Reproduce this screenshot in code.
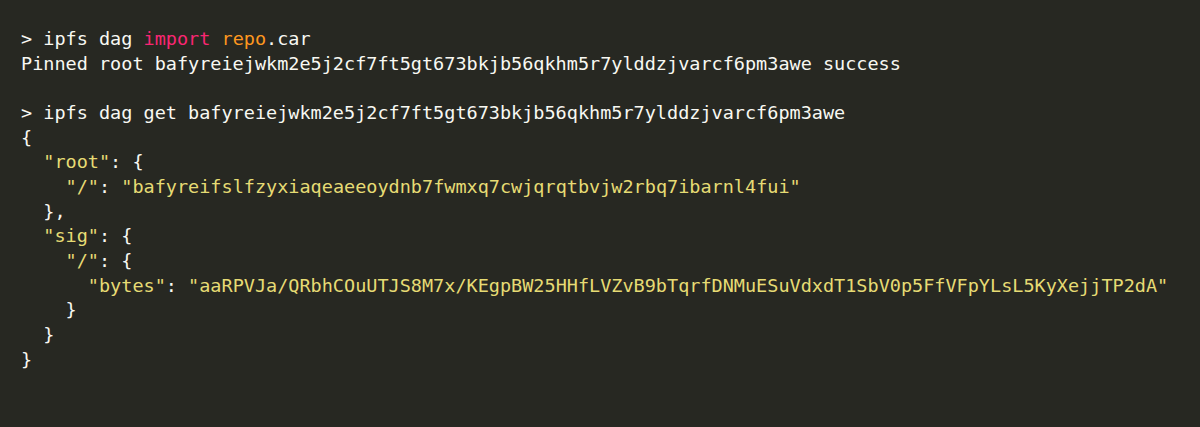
const Str = ({ children }: { children: React.ReactNode }) => <span className="text-[#e6db74]">{children}</span>;

const App = () => {
    return (
        <main className="min-h-screen w-full bg-[#272822] text-[#f8f8f2]">
            <pre className="pt-[27px] pl-[21px] font-['DejaVu_Sans_Mono','Liberation_Mono',monospace] text-[18.5px] leading-[24.67px] whitespace-pre">
                <div>
                    {'> ipfs dag '}
                    <span className="text-[#f92672]">import</span> <span className="text-[#fd971f]">repo</span>.car
                </div>
                <div>Pinned root bafyreiejwkm2e5j2cf7ft5gt673bkjb56qkhm5r7ylddzjvarcf6pm3awe success</div>
                <div>{' '}</div>
                <div>{'> ipfs dag get bafyreiejwkm2e5j2cf7ft5gt673bkjb56qkhm5r7ylddzjvarcf6pm3awe'}</div>
                <div>{'{'}</div>
                <div>
                    {'  '}
                    <Str>"root"</Str>: {'{'}
                </div>
                <div>
                    {'    '}
                    <Str>"/"</Str>: <Str>"bafyreifslfzyxiaqeaeeoydnb7fwmxq7cwjqrqtbvjw2rbq7ibarnl4fui"</Str>
                </div>
                <div>{'  },'}</div>
                <div>
                    {'  '}
                    <Str>"sig"</Str>: {'{'}
                </div>
                <div>
                    {'    '}
                    <Str>"/"</Str>: {'{'}
                </div>
                <div>
                    {'      '}
                    <Str>"bytes"</Str>: <Str>"aaRPVJa/QRbhCOuUTJS8M7x/KEgpBW25HHfLVZvB9bTqrfDNMuESuVdxdT1SbV0p5FfVFpYLsL5KyXejjTP2dA"</Str>
                </div>
                <div>{'    }'}</div>
                <div>{'  }'}</div>
                <div>{'}'}</div>
            </pre>
        </main>
    );
};

export default App;
